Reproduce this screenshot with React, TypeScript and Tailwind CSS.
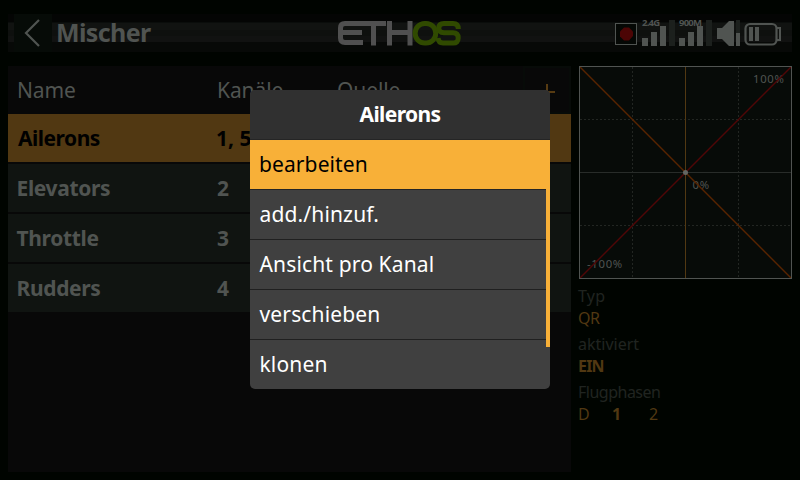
const rows = [
  { name: "Elevators", channel: "2" },
  { name: "Throttle", channel: "3" },
  { name: "Rudders", channel: "4" },
];

const actions = ["add./hinzuf.", "Ansicht pro Kanal", "verschieben", "klonen"];

function Logo() {
  return (
    <svg width="126" height="26" viewBox="0 0 126 26" fill="none" strokeWidth="5">
      <g stroke="#505050">
        <path d="M26 3.500H8Q3.500 3.500 3.500 8V18Q3.500 22.500 8 22.500H26M4 12.500H25M26 3.500H49M36.500 3.500V25.500" />
        <path d="M52.500 1V25.500M73 1V25.500M52 12.500H73" />
      </g>
      <g stroke="#304a00">
        <rect x="78.200" y="3.500" width="20.500" height="19.500" rx="9.500" />
        <path d="M121.300 9Q121.300 3.500 116 3.500H107Q101.800 3.500 101.800 8T107 12.800H116Q121.200 12.800 121.200 18T116 23H106Q101.500 23 101 18" />
      </g>
    </svg>
  );
}

function Signal({ label }: { label: string }) {
  return (
    <div className="relative h-[27px] w-[37px]">
      <span className="absolute left-0 top-[-1px] whitespace-nowrap text-[9.5px] font-bold leading-[10px] tracking-[-0.8px] text-[#505451]">{label}</span>
      <div className="flex h-full items-end gap-[3px]">
        <i className="h-2 w-1.5 bg-[#505451]" />
        <i className="h-3.5 w-1.5 bg-[#505451]" />
        <i className="h-5 w-1.5 bg-[#505451]" />
        <i className="h-[26px] w-1.5 bg-[#1c201d]" />
      </div>
    </div>
  );
}

function StatusIcons() {
  return (
    <div className="flex h-[27px] text-[#505451]">
      <svg width="27" height="27" viewBox="0 0 27 27">
        <rect x=".5" y="4.500" width="21" height="21" fill="#050805" stroke="currentColor" />
        <path d="M9 8.500H14L18 12.500V17L14 21.500H9L5 17.500V12.500Z" fill="#4c0505" />
      </svg>
      <Signal label="2.4G" />
      <Signal label="900M" />
      <svg width="65" height="27" viewBox="0 0 65 27" fill="currentColor">
        <path d="M1 9H6L13 2H18V27H13L6 20H1Z" />
        <path d="M20 1H24V14H20Z" fill="#1c201d" />
        <path d="M20 14H24V27H20Z" />
        <rect x="29.500" y="5" width="31" height="20.500" rx="4.500" fill="none" stroke="currentColor" strokeWidth="2.200" />
        <path d="M61 9H64V21H61" fill="none" stroke="currentColor" strokeWidth="2" />
        <path d="M33 8H37V22H33ZM39 8H43V22H39Z" />
      </svg>
    </div>
  );
}

function CurveChart() {
  return (
    <svg className="block" width="213" height="213" viewBox="0 0 213 213">
      <path d="M0 0H213V213H0Z" fill="#070b08" />
      <path d="M53.500 1V212M159.500 1V212M1 53.500H212M1 159.500H212" stroke="#222622" strokeDasharray="2 2" />
      <path d="M1 106.500H212" stroke="#282c29" />
      <g fill="#505451" fontSize="11.3" letterSpacing=".7">
        <text x="174" y="17">100%</text>
        <text x="113.500" y="123">0%</text>
        <text x="8" y="202">-100%</text>
      </g>
      <path d="M1 212L212 1" stroke="#500606" strokeWidth="1.400" />
      <path d="M1 1L212 212" stroke="#582400" strokeWidth="1.400" />
      <path d="M106.500 1V212" stroke="#513812" />
      <rect x=".5" y=".5" width="212" height="212" fill="none" stroke="#505451" />
      <circle cx="106.500" cy="106.500" r="2.500" fill="#626663" />
    </svg>
  );
}

export default function App() {
  return (
    <div className="relative h-[480px] w-[800px] overflow-hidden bg-[#000400] font-['Noto_Sans','Open_Sans',sans-serif]">
      <div className="flex h-full flex-col px-2 pb-2 pt-[14px]">
        <header className="flex h-[38px] items-center bg-[linear-gradient(to_bottom,#040504_0_8px,#0a0d0b_8px_9px,#111311_9px_16px,#0e100e_16px_22px,#111211_22px_28px,#070907_28px_38px)]">
          <div className="ml-1.5 flex size-[38px] items-center bg-[#060b07]">
            <svg width="38" height="38" viewBox="0 0 38 38" fill="none" stroke="#505451" strokeWidth="2.200">
              <path d="M25 6L12 19L25 32" />
            </svg>
          </div>
          <h1 className="ml-[4px] w-[281px] pb-0.5 text-[25px] font-bold leading-[36px] tracking-[-0.6px] text-[#505451]">Mischer</h1>
          <Logo />
          <div className="ml-auto mr-[11px] mt-[5px] self-start"><StatusIcons /></div>
        </header>

        <main className="mt-[14px] flex flex-1 gap-2">
          <section className="w-[563px] bg-[#080808]">
            <div className="flex h-12 items-center text-[21px] leading-[48px] tracking-[-0.1px] text-[#505451]">
              <span className="w-[209px] pl-[9px]">Name</span>
              <span className="w-[120px]">Kanäle</span>
              <span className="flex-1">Quelle</span>
              <div className="flex size-12 items-center justify-center border-2 border-[#070b08] pl-0.5 pt-[3px]">
                <svg width="18" height="18" viewBox="0 0 18 18" stroke="#573b12" strokeWidth="2"><path d="M8 1V17M0 9H16" /></svg>
              </div>
            </div>
            <div className="flex flex-col gap-0.5 text-[21px] font-bold leading-[48px]">
              <div className="flex h-12 bg-[#513812] text-black">
                <span className="w-[208px] pl-2.5 tracking-[-0.5px]">Ailerons</span>
                <span>1, 5</span>
              </div>
              {rows.map((row) => (
                <div key={row.name} className="flex h-12 bg-[#101411] text-[#505451]">
                  <span className="w-[209px] pl-[8.5px] tracking-[-0.35px]">{row.name}</span>
                  <span>{row.channel}</span>
                </div>
              ))}
            </div>
          </section>

          <aside className="flex w-[213px] flex-col text-[#202420]">
            <CurveChart />
            <dl className="-ml-px mt-[5px] text-[16px] leading-6">
              <dt className="tracking-[0.2px]">Typ</dt>
              <dd className="-mt-0.5 mb-0.5 tracking-[-0.4px] text-[#513812]">QR</dd>
              <dt>aktiviert</dt>
              <dd className="-mt-0.5 mb-0.5 font-bold tracking-[-0.8px] text-[#513812]">EIN</dd>
              <dt className="tracking-[-0.5px]">Flugphasen</dt>
              <dd className="-mt-0.5 flex text-[#513812]">
                <span className="w-[34px]">D</span>
                <b className="w-[37px]">1</b>
                <span>2</span>
              </dd>
            </dl>
          </aside>
        </main>
      </div>

      <div className="absolute left-[250px] top-[90px] h-[299px] w-[300px] overflow-hidden rounded-[5px] bg-[#404040] text-[21px] text-white">
        <h2 className="h-[50px] border-b border-[#252525] bg-[#303030] text-center font-bold leading-[48px] tracking-[-0.6px]">Ailerons</h2>
        <div className="h-[50px] border-b border-[#252525] bg-[#f8b038] pl-[9px] leading-[48px] tracking-[0.1px] text-black">bearbeiten</div>
        <div className="divide-y divide-[#202020]">
          {actions.map((action) => (
            <div key={action} className="h-[50px] pl-[9.5px] leading-[48px] tracking-[0.15px]">{action}</div>
          ))}
        </div>
        <div className="absolute right-0 top-[50px] h-[207px] w-1 bg-[#f8b038]" />
      </div>
    </div>
  );
}
